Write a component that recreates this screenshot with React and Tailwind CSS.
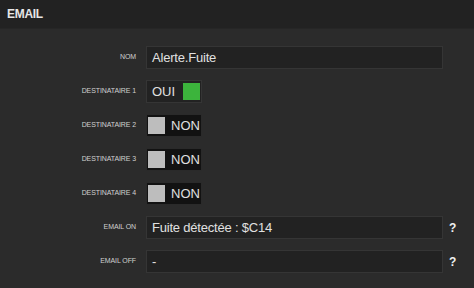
export default function App() {
  const rows = [
    { label: "NOM", type: "input", value: "Alerte.Fuite" },
    { label: "DESTINATAIRE 1", type: "toggle", on: true },
    { label: "DESTINATAIRE 2", type: "toggle", on: false },
    { label: "DESTINATAIRE 3", type: "toggle", on: false },
    { label: "DESTINATAIRE 4", type: "toggle", on: false },
    { label: "EMAIL ON", type: "input", value: "Fuite détectée : $C14", help: true },
    { label: "EMAIL OFF", type: "input", value: "-", help: true },
  ];

  return (
    <div className="w-[474px] h-[288px] overflow-hidden bg-[#2b2b2b] font-['Liberation_Sans',Arial,sans-serif]">
      {/* Header */}
      <div className="h-[29px] bg-[#222222] flex items-center pl-[7px] border-b border-[#262626]">
        <span className="text-[12px] font-bold text-[#e6e6e6] tracking-[-0.3px]">EMAIL</span>
      </div>

      {/* Form */}
      <div className="flex flex-col gap-[11px] pt-[17px]">
        {rows.map((row) => (
          <div key={row.label} className="flex items-center h-[23px]">
            <div className="w-[137px] text-right pr-[1px] text-[7px] text-[#d0d0d0] tracking-[-0.1px]">
              {row.label}
            </div>
            <div className="ml-[9px] flex items-center">
              {row.type === "input" ? (
                <div className="w-[297px] h-[23px] bg-[#222222] border border-[#353535] flex items-center pl-[5px] text-[13px] text-[#e0e0e0] tracking-[-0.2px]">
                  {row.value}
                </div>
              ) : row.on ? (
                <div className="w-[56px] h-[23px] bg-[#222222] border border-[#353535] flex items-center pl-[5px] pr-[1px] justify-between">
                  <span className="text-[13px] text-[#e0e0e0]">OUI</span>
                  <span className="w-[17px] h-[17px] bg-[#3cb43c]" />
                </div>
              ) : (
                <div className="w-[56px] h-[23px] bg-[#121212] border border-[#2a2a2a] flex items-center pl-[1px] gap-[6px]">
                  <span className="w-[17px] h-[17px] bg-[#bdbdbd]" />
                  <span className="text-[13px] text-[#e0e0e0]">NON</span>
                </div>
              )}
              {row.help && (
                <span className="ml-[6px] text-[12px] font-bold text-[#f0f0f0]">?</span>
              )}
            </div>
          </div>
        ))}
      </div>
    </div>
  );
}
